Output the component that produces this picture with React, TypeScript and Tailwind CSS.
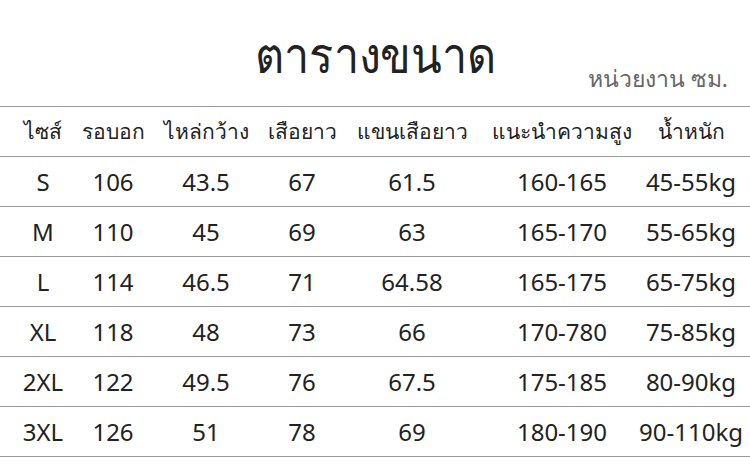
const headers = ["ไซส์", "รอบอก", "ไหล่กว้าง", "เสือยาว", "แขนเสือยาว", "แนะนำความสูง", "น้ำหนัก"];

const rows = [
  ["S", "106", "43.5", "67", "61.5", "160-165", "45-55kg"],
  ["M", "110", "45", "69", "63", "165-170", "55-65kg"],
  ["L", "114", "46.5", "71", "64.58", "165-175", "65-75kg"],
  ["XL", "118", "48", "73", "66", "170-780", "75-85kg"],
  ["2XL", "122", "49.5", "76", "67.5", "175-185", "80-90kg"],
  ["3XL", "126", "51", "78", "69", "180-190", "90-110kg"],
];

const cols = "grid grid-cols-[86px_54px_132px_60px_160px_140px_118px]";

export default function App() {
  return (
    <div className="h-[476px] w-[750px] bg-white text-[#222] [font-family:'Noto_Sans','Open_Sans',sans-serif]">
      <div className="relative h-[106px]">
        <div className="pt-[22px] text-center leading-[64px]">
          <span className="inline-block scale-x-90 text-[50px]">ตารางขนาด</span>
        </div>
        <div className="absolute right-[22px] top-[61px] text-[23px] text-[#666]">หน่วยงาน ซม.</div>
      </div>
      <div className={`${cols} h-[51px] items-center border-y border-[#999] text-[21px]`}>
        {headers.map((h) => (
          <div key={h} className="flex justify-center whitespace-nowrap">
            {h}
          </div>
        ))}
      </div>
      {rows.map((r) => (
        <div key={r[0]} className={`${cols} h-[50px] items-center border-b border-[#999] text-[24px]`}>
          {r.map((c, i) => (
            <div key={i} className="flex justify-center whitespace-nowrap">
              {c}
            </div>
          ))}
        </div>
      ))}
    </div>
  );
}
